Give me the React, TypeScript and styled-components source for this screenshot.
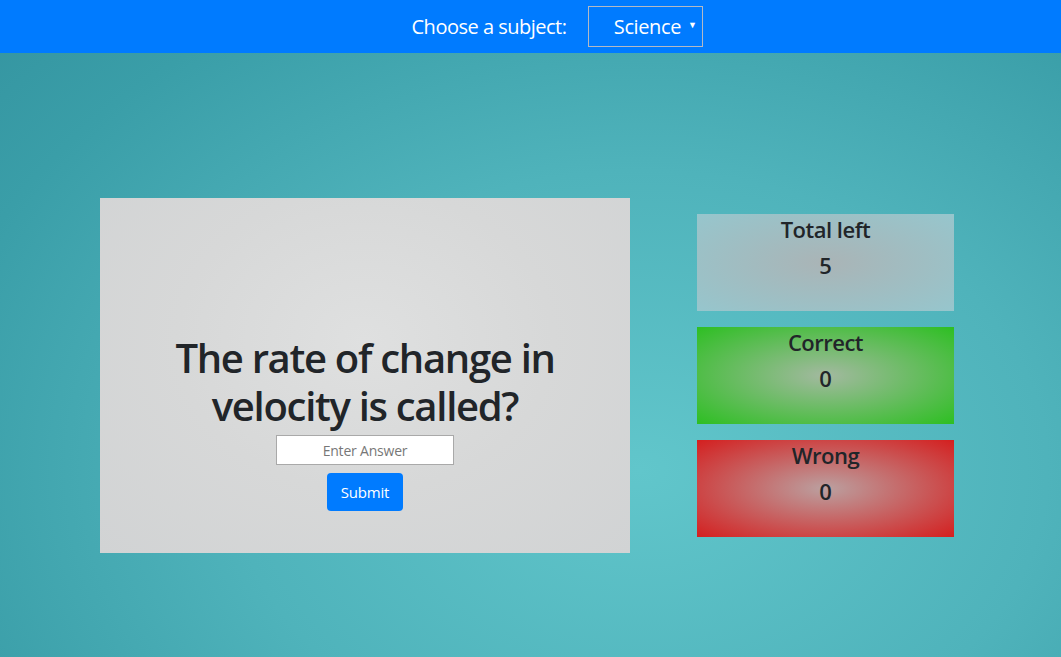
import React from "react";
import styled, { createGlobalStyle } from "styled-components";

const Global = createGlobalStyle`
  html, body { margin: 0; padding: 0; }
  body {
    font-family: "Open Sans", "Noto Sans", sans-serif;
    color: #212529;
    width: 1061px;
    height: 657px;
    overflow: hidden;
  }
  * { box-sizing: border-box; }
`;

const Page = styled.div`
  width: 1061px;
  height: 657px;
  display: flex;
  flex-direction: column;
  background: radial-gradient(farthest-corner at 640px 470px, #61c6cb 0%, #4fb3bb 45%, #3a9ea8 80%, #3494a0 100%);
`;

const Header = styled.header`
  height: 53px;
  background: #007bff;
  display: flex;
  align-items: center;
  justify-content: center;
  gap: 22px;
  padding-left: 54px;
`;

const Label = styled.span`
  color: #fff;
  font-size: 20px;
  letter-spacing: -0.5px;
`;

const SelectBox = styled.div`
  width: 115px;
  height: 41px;
  border: 1px solid #b3b9c4;
  display: flex;
  align-items: center;
  justify-content: flex-end;
  padding-right: 6px;
  gap: 7px;
  color: #fff;
  font-size: 20px;
  letter-spacing: -0.4px;
`;

const Caret = styled.span`
  font-size: 9px;
  align-self: flex-start;
  margin-top: 11px;
`;

const Main = styled.main`
  display: flex;
  align-items: flex-start;
  padding: 145px 0 0 100px;
  gap: 67px;
`;

const Card = styled.section`
  width: 530px;
  height: 355px;
  background: radial-gradient(ellipse at 50% 40%, #dfe0e0 0%, #d7d8d8 50%, #d1d3d4 100%);
  display: flex;
  flex-direction: column;
  align-items: center;
  justify-content: flex-end;
  padding: 0 30px 42px;
`;

const Question = styled.h1`
  margin: 0 0 5px;
  font-size: 40px;
  font-weight: 600;
  line-height: 48px;
  text-align: center;
  letter-spacing: -1.3px;
`;

const AnswerInput = styled.input`
  width: 178px;
  height: 30px;
  border: 1px solid #a9a9a9;
  background: #fff;
  text-align: center;
  font-family: "Open Sans", sans-serif;
  font-size: 14px;
  letter-spacing: -0.2px;
  margin: 0 0 8px;
  padding: 0;
  &::placeholder { color: #777; }
`;

const SubmitButton = styled.button`
  width: 76px;
  height: 38px;
  background: #007bff;
  color: #fff;
  border: none;
  border-radius: 4px;
  font-family: "Open Sans", sans-serif;
  font-size: 15px;
  letter-spacing: -0.2px;
`;

const Stats = styled.aside`
  display: flex;
  flex-direction: column;
  gap: 16px;
  padding-top: 16px;
`;

const StatBox = styled.div<{ $edge: string; $center: string }>`
  width: 257px;
  height: 97px;
  background: radial-gradient(ellipse at 50% 50%, ${(p) => p.$center} 0%, ${(p) => p.$edge} 100%);
  display: flex;
  flex-direction: column;
  align-items: center;
  padding-top: 1px;
`;

const StatTitle = styled.h4`
  margin: 0;
  font-size: 22px;
  font-weight: 600;
  line-height: 29px;
  letter-spacing: -0.5px;
`;

const StatValue = styled.h4`
  margin: 7px 0 0;
  font-size: 22px;
  font-weight: 600;
  line-height: 29px;
`;

const stats = [
  { title: "Total left", value: 5, center: "#aab4b6", edge: "#96c6cd" },
  { title: "Correct", value: 0, center: "#a3b9a0", edge: "#2dbf22" },
  { title: "Wrong", value: 0, center: "#bba0a0", edge: "#d41f1f" },
];

export default function App() {
  return (
    <Page>
      <Global />
      <Header>
        <Label>Choose a subject:</Label>
        <SelectBox>
          Science
          <Caret>▼</Caret>
        </SelectBox>
      </Header>
      <Main>
        <Card>
          <Question>
            The rate of change in
            <br />
            velocity is called?
          </Question>
          <AnswerInput placeholder="Enter Answer" />
          <SubmitButton>Submit</SubmitButton>
        </Card>
        <Stats>
          {stats.map((s) => (
            <StatBox key={s.title} $center={s.center} $edge={s.edge}>
              <StatTitle>{s.title}</StatTitle>
              <StatValue>{s.value}</StatValue>
            </StatBox>
          ))}
        </Stats>
      </Main>
    </Page>
  );
}
